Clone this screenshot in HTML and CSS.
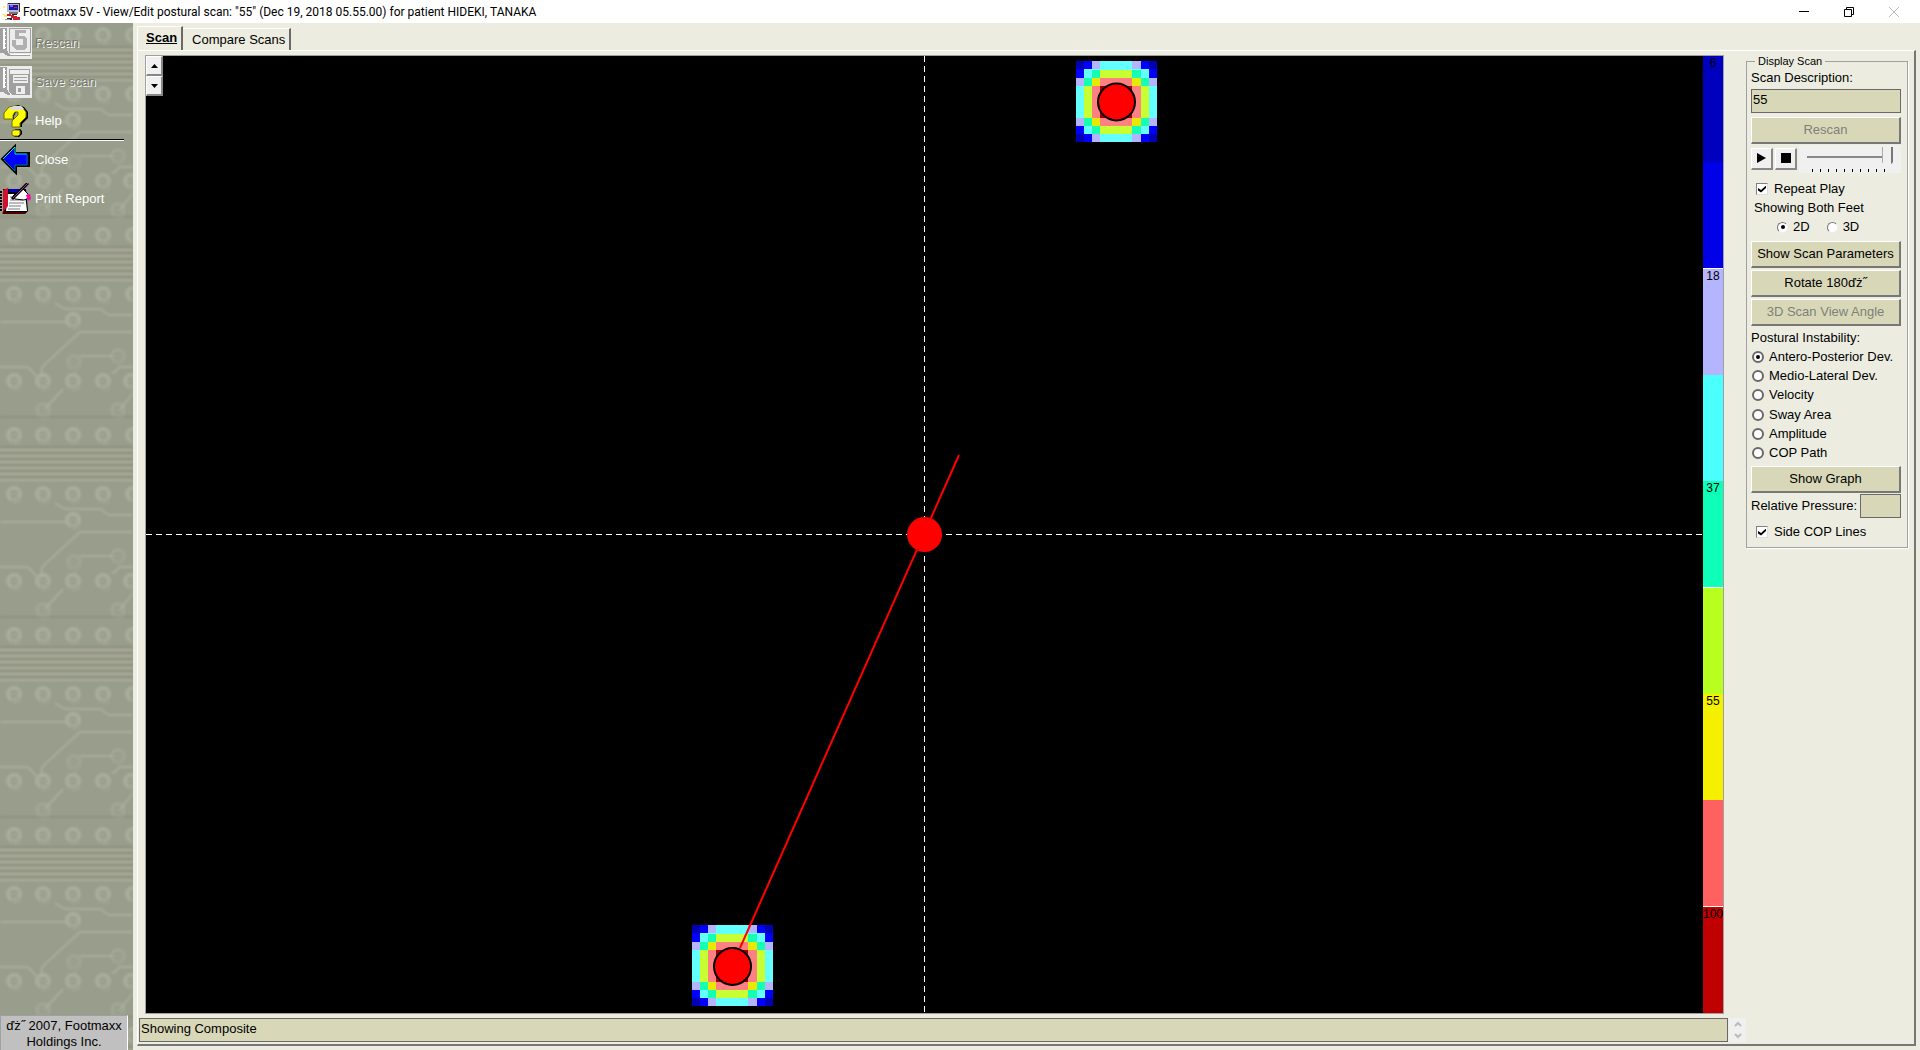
FILE: index.html
```html
<!DOCTYPE html>
<html lang="en">
<head>
<meta charset="utf-8">
<title>Footmaxx 5V</title>
<link rel="stylesheet" href="styles.css">
</head>
<body>
<div class="window">
  <header class="titlebar">
    <svg class="app-icon" width="18" height="18" viewBox="0 0 18 18" shape-rendering="crispEdges">
      <path d="M1 3h2v2H1zM0 11h3v1h2v2H2v-2H0z" fill="#ffee60"/>
      <path d="M5 0h13v9H5z" fill="#b8b8c8"/><path d="M6 0h12v1H6zM17 1h1v8h-1z" fill="#333"/>
      <path d="M7 2h9v5H7z" fill="#1818b0"/><path d="M8 2h3v2H8z" fill="#6868ff"/><path d="M12 4h3v1h-3z" fill="#e02020"/>
      <path d="M7 9h9v2H7z" fill="#777"/><path d="M5 11h4v1h3v1h3v1h3v3h-7v-2H9v-2H5z" fill="#d02030"/>
      <path d="M10 11h5v1h-5zM5 15h5v2H5z" fill="#223"/><path d="M3 16h5v1H3z" fill="#99a"/>
    </svg>
    <h1 class="title">Footmaxx 5V - View/Edit postural scan: "55" (Dec 19, 2018 05.55.00) for patient HIDEKI, TANAKA</h1>
    <div class="window-buttons">
      <button class="win-btn" aria-label="Minimize"><svg width="10" height="10" viewBox="0 0 10 10"><path d="M0 4.500h10" stroke="#000"/></svg></button>
      <button class="win-btn" aria-label="Restore"><svg width="10" height="10" viewBox="0 0 10 10"><path d="M.5 2.500h7v7h-7zM2.500 2.500v-2h7v7h-2" fill="none" stroke="#000"/></svg></button>
      <button class="win-btn" aria-label="Close window" disabled><svg width="10" height="10" viewBox="0 0 10 10"><path d="M0 0l10 10M10 0L0 10" stroke="#bbb"/></svg></button>
    </div>
  </header>

  <div class="body">
    <nav class="sidebar">
      <svg class="texture" width="100%" height="100%" aria-hidden="true">
        <defs>
          <filter id="soft"><feGaussianBlur stdDeviation="1.200"/></filter>
          <g id="chip" fill="none"><circle r="6" stroke="#b4b8a8" stroke-width="4"/><path d="M-4 0h7M-2 5l4 5M3 4l3 5" stroke="#a5a997" stroke-width="3"/></g>
          <pattern id="board" width="133" height="200" patternUnits="userSpaceOnUse">
            <rect width="133" height="200" fill="#999d8b"/>
            <g filter="url(#soft)">
              <path d="M0 27h133M0 33h133M0 39h133M0 45h133M0 51h133M0 57h133M0 99h66M80 109h53M80 133h32M0 144h28l8 9M55 80l10 6h35l9 6h24M80 109l-38 35v10M63 166l-18 20M112 151l8-7h13M133 170l-14 18" fill="none" stroke="#a9ad9b" stroke-width="2"/>
              <path d="M0 24h133M0 30h133M0 36h133M0 42h133M0 48h133M0 54h133M0 194h133" stroke="#8d917d" stroke-width="2"/>
              <g opacity="0.600">
                <use href="#chip" x="14" y="12"/><use href="#chip" x="43" y="12"/><use href="#chip" x="73" y="12"/><use href="#chip" x="103" y="12"/><use href="#chip" x="133" y="12"/>
                <use href="#chip" x="14" y="71"/><use href="#chip" x="43" y="71"/><use href="#chip" x="73" y="71"/><use href="#chip" x="103" y="71"/><use href="#chip" x="133" y="71"/>
                <use href="#chip" x="14" y="158"/><use href="#chip" x="43" y="158"/><use href="#chip" x="73" y="158"/><use href="#chip" x="103" y="158"/><use href="#chip" x="131" y="158"/>
                <use href="#chip" x="73" y="97"/>
              </g>
              <g opacity="0.300">
                <use href="#chip" x="74" y="139"/><use href="#chip" x="118" y="133"/><use href="#chip" x="43" y="187"/><use href="#chip" x="118" y="187"/>
              </g>
            </g>
          </pattern>
        </defs>
        <rect width="100%" height="100%" fill="url(#board)"/>
      </svg>
      <div class="tools">
        <button class="tool" disabled>
          <svg width="32" height="32" viewBox="0 0 32 32" shape-rendering="crispEdges">
            <path d="M0 0h32v32H0z" fill="#ececec"/><path d="M0 1h7v22l3 5h20v1H8l-5-3H0z" fill="#a0a0a0"/>
            <path d="M3 2h2v20H3zM5 4h1v1H5zM5 8h1v1H5zM5 12h1v1H5zM5 16h1v1H5zM5 20h1v1H5z" fill="#fff"/>
            <path d="M9.500 1.500h21v24h-21z" fill="none" stroke="#a0a0a0"/><path d="M11 27h18" stroke="#fff"/>
            <path d="M15 3h11v3h-7v3h5l3 3v8l-3 3h-8l-4-4v-6h4v5h7v-6h-8z" fill="#b0b0b0"/>
          </svg>
          <span>Rescan</span>
        </button>
        <button class="tool" disabled>
          <svg width="32" height="32" viewBox="0 0 32 32" shape-rendering="crispEdges">
            <path d="M0 0h32v32H0z" fill="#ececec"/><path d="M0 1h7v22l3 5v1H8l-5-3H0z" fill="#a0a0a0"/>
            <path d="M3 2h2v20H3zM5 4h1v1H5zM5 8h1v1H5zM5 12h1v1H5zM5 16h1v1H5zM5 20h1v1H5z" fill="#fff"/>
            <path d="M9 3h21v26H12l-3-3z" fill="#a0a0a0"/><path d="M10 4h19v4H10zM13 9h15v8H13zM16 20h9v8h-9z" fill="#eee"/>
            <path d="M14 11h13v1H14zM14 14h13v1H14zM18 22h3v4h-3z" fill="#a0a0a0"/>
          </svg>
          <span>Save scan</span>
        </button>
        <button class="tool">
          <svg width="32" height="32" viewBox="0 0 32 32">
            <path d="M6 14V8l5-6 7-2 6 2 4 5v6l-6 6v3h-9v-6l6-6V7h-3l-2 4v3z" fill="#000"/>
            <path d="M4 14V8l5-6 7-1 6 1 4 5v5l-6 6v4h-8v-6l6-6V7h-3l-2 3v4z" fill="#ff0" stroke="#777000"/>
            <path d="M9 3l5-2h7l3 3-2 1H11z" fill="#ddd"/>
            <path d="M13 26l3-2h4l2 2v3l-3 3h-4l-2-2z" fill="#000"/><path d="M12 26l2-1h5l1 1v3l-2 2h-4l-2-1z" fill="#ff0" stroke="#777000"/>
          </svg>
          <span>Help</span>
        </button>
        <hr class="divider">
        <button class="tool">
          <svg width="32" height="32" viewBox="0 0 32 32">
            <path d="M2 15L15 2v7h14v13H16v7z" fill="#00f" stroke="#000" stroke-width="2"/>
            <path d="M3 15L15 3v7h12" fill="none" stroke="#0ee" stroke-width="1"/><path d="M4 16l11 11v-6h12V11" fill="none" stroke="#077" stroke-width="1"/>
          </svg>
          <span>Close</span>
        </button>
        <button class="tool">
          <svg width="32" height="32" viewBox="0 0 32 32">
            <path d="M3 6h23l2 22-3 3H3z" fill="#000"/><path d="M9 6h14v3H9z" fill="#0000c0"/>
            <path d="M8 11h17l2 17H6z" fill="#fff"/><path d="M10 14h9M10 17h13M9 20h15M9 23h12M8 26h12" stroke="#bbb" stroke-width="2"/>
            <path d="M3 7l5-2v18l-5 6z" fill="#d01030"/><path d="M1 8v20" stroke="#000" stroke-width="2" stroke-dasharray="2 1"/>
            <path d="M17 9l5-4 6 6 1 4-5 2-9-1-2-3z" fill="#fff" stroke="#000"/><path d="M26 12l4-1 1 5-3 2z" fill="#f0a"/>
            <path d="M28 0L12 16" stroke="#000" stroke-width="3"/><path d="M28 0L13 15" stroke="#b030b0" stroke-width="1"/>
            <path d="M2 30h23" stroke="#900"/>
          </svg>
          <span>Print Report</span>
        </button>
      </div>
      <p class="copyright">ďż˝ 2007, Footmaxx Holdings Inc.</p>
    </nav>

    <main class="main">
      <div class="tabs" role="tablist">
        <button class="tab selected" role="tab" aria-selected="true">Scan</button>
        <button class="tab" role="tab" aria-selected="false">Compare Scans</button>
      </div>
      <section class="panel">
        <div class="work">
          <div class="scan">
            <svg class="plot" viewBox="0 0 1557 957">
              <defs>
                <g id="foot" shape-rendering="crispEdges">
                  <path d="M0 0h81v81H0z" fill="#64ffff"/>
                  <path d="M0 0h8v8H0zM73 0h8v8h-8zM0 73h8v8H0zM73 73h8v8h-8z" fill="#0000b4"/>
                  <path d="M8 0h8v8H8zM65 0h8v8h-8zM0 8h8v9H0zM73 8h8v9h-8zM0 65h8v8H0zM73 65h8v8h-8zM8 73h8v8H8zM65 73h8v8h-8z" fill="#0000ff"/>
                  <path d="M16 0h8v8h-8zM56 0h9v8h-9zM0 17h8v8H0zM73 17h8v8h-8zM0 57h8v8H0zM73 57h8v8h-8zM16 73h8v8h-8zM56 73h9v8h-9z" fill="#b4b4ff"/>
                  <path d="M16 9h49v8H16zM16 65h49v8H16zM8 17h8v48H8zM65 17h8v48h-8z" fill="#c8ff32"/>
                  <path d="M16 9h8v8h-8zM56 9h9v8h-9zM8 17h8v8H8zM65 17h8v8h-8zM8 57h8v8H8zM65 57h8v8h-8zM16 65h8v8h-8zM56 65h9v8h-9z" fill="#14ffb4"/>
                  <path d="M16 17h49v48H16z" fill="#ff8080"/>
                  <path d="M16 17h8v8h-8zM56 17h9v8h-9zM16 57h8v8h-8zM56 57h9v8h-9z" fill="#e8e800"/>
                  <path d="M24 25h8v8h-8zM48 25h8v8h-8zM24 49h8v8h-8zM48 49h8v8h-8z" fill="#a00000"/>
                </g>
              </defs>
              <path d="M778.500 0v957M0 478.500h1557" stroke="#fff" stroke-dasharray="6 4"/>
              <use href="#foot" x="930" y="5"/>
              <circle cx="970.500" cy="46" r="18.500" fill="#f00" stroke="#000" stroke-width="2"/>
              <use href="#foot" x="546" y="869"/>
              <circle cx="586.500" cy="910.500" r="18.500" fill="#f00" stroke="#000" stroke-width="2"/>
              <path d="M813 399L594 892" stroke="#f00" stroke-width="2"/>
              <circle cx="778.500" cy="478.500" r="17.500" fill="#f00"/>
            </svg>
            <div class="zoomer">
              <button class="step" aria-label="Up"><svg width="7" height="4" viewBox="0 0 7 4"><path d="M0 4L3.500 0 7 4z"/></svg></button>
              <button class="step" aria-label="Down"><svg width="7" height="4" viewBox="0 0 7 4"><path d="M0 0L3.500 4 7 0z"/></svg></button>
            </div>
            <div class="scale">
              <span class="band c6">6</span>
              <span class="band c12"></span>
              <span class="band c18">18</span>
              <span class="band c28"></span>
              <span class="band c37">37</span>
              <span class="band c46"></span>
              <span class="band c55">55</span>
              <span class="band c75"></span>
              <span class="band c100">100</span>
            </div>
          </div>
          <aside class="side">
            <fieldset class="group">
              <legend>Display Scan</legend>
              <label class="text-line tall" for="desc">Scan Description:</label>
              <input class="field" id="desc" type="text" value="55">
              <button class="btn" disabled>Rescan</button>
              <div class="player">
                <button class="mini" aria-label="Play"><svg width="10" height="10" viewBox="0 0 10 10"><path d="M0 0l9 5-9 5z"/></svg></button>
                <button class="mini" aria-label="Stop"><svg width="10" height="10" viewBox="0 0 10 10"><path d="M0 0h10v10H0z"/></svg></button>
                <input class="slider" type="range" min="0" max="9" value="9" aria-label="Frame">
              </div>
              <label class="check"><input type="checkbox" checked>Repeat Play</label>
              <p class="text-line inset">Showing Both Feet</p>
              <div class="dims">
                <label class="sunk"><input type="radio" name="dim" checked>2D</label>
                <label class="sunk"><input type="radio" name="dim">3D</label>
              </div>
              <div class="stack">
                <button class="btn">Show Scan Parameters</button>
                <button class="btn">Rotate 180ďż˝</button>
                <button class="btn" disabled>3D Scan View Angle</button>
              </div>
              <p class="text-line">Postural Instability:</p>
              <div class="radios">
                <label><input type="radio" name="instab" checked>Antero-Posterior Dev.</label>
                <label><input type="radio" name="instab">Medio-Lateral Dev.</label>
                <label><input type="radio" name="instab">Velocity</label>
                <label><input type="radio" name="instab">Sway Area</label>
                <label><input type="radio" name="instab">Amplitude</label>
                <label><input type="radio" name="instab">COP Path</label>
              </div>
              <button class="btn">Show Graph</button>
              <div class="pressure">
                <label for="pressure">Relative Pressure:</label>
                <input class="field" id="pressure" type="text">
              </div>
              <label class="check"><input type="checkbox" checked>Side COP Lines</label>
            </fieldset>
          </aside>
        </div>
        <div class="status-row">
          <p class="status">Showing Composite</p>
          <div class="scroller">
            <svg width="8" height="20" viewBox="0 0 8 20"><path d="M1 6l3-3 3 3M1 14l3 3 3-3" fill="none" stroke="#bbb" stroke-width="2"/></svg>
          </div>
        </div>
      </section>
    </main>
  </div>
</div>
</body>
</html>
```
FILE: styles.css
```css
* { box-sizing: border-box; }
body { margin: 0; font: 13px/16px "Liberation Sans", Arial, sans-serif; color: #000; background: #ecede0; }
button, input { font: inherit; color: inherit; margin: 0; }
button { padding: 0; }
p { margin: 0; }
svg { display: block; flex: none; }

.window { min-height: 100vh; display: flex; flex-direction: column; }
.titlebar { height: 23px; background: #fff; display: flex; align-items: center; padding-left: 2px; gap: 3px; }
.title { margin: 0; font: 12px/16px Roboto, "Open Sans", sans-serif; flex: 1; white-space: nowrap; }
.window-buttons { display: flex; padding-right: 4px; }
.win-btn { width: 45px; height: 20px; border: 0; background: none; display: flex; align-items: center; justify-content: center; }

.body { flex: 1; display: flex; }

/* left toolbar */
.sidebar { width: 133px; flex: none; position: relative; display: flex; flex-direction: column; justify-content: space-between; background: #989c89; }
.texture { position: absolute; inset: 0; }
.tools { position: relative; padding-top: 4px; display: flex; flex-direction: column; gap: 7px; }
.tool { border: 0; background: none; display: flex; align-items: center; gap: 3px; height: 32px; color: #fff; white-space: nowrap; text-align: left; }
.tool:disabled { color: #787a70; text-shadow: 1px 1px 0 #f4f4f0; }
.divider { width: 124px; height: 2px; margin: -5px 0 -4px; border: 0; border-top: 1px solid #000; background: #fff; }
.copyright { position: relative; width: 128px; height: 36px; padding: 2px 0; background: #c0c0c0; border: 1px solid #a0a0a0; border-right-color: #fff; border-bottom: 0; text-align: center; }

/* tabbed panel */
.main { flex: 1; min-width: 0; display: flex; flex-direction: column; padding: 3px 4px 5px 4px; }
.tabs { height: 24px; display: flex; align-items: flex-end; }
.tab { height: 22px; border: 1px solid #fff; border-width: 1px 2px 0 0; border-right-color: #696969; background: none; padding: 0 4px 0 9px; }
.tab.selected { height: 24px; border-left: 1px solid #fff; padding: 0 4px 1px 8px; font-weight: bold; text-decoration: underline; }
.panel { flex: 1; display: flex; flex-direction: column; border: 1px solid #fff; border-right: 2px solid #777; border-bottom: 2px solid #777; padding: 4px 0 2px 1px; }
.work { flex: 1; display: flex; align-items: stretch; padding-left: 6px; }
.scan { flex: 1; min-width: 0; position: relative; display: flex; background: #000; border: 1px solid #a0a0a0; }
.plot { flex: 1; min-width: 0; height: auto; }
.zoomer { position: absolute; left: 0; top: 0; display: flex; flex-direction: column; }
.step { width: 17px; height: 20px; display: flex; align-items: center; justify-content: center; background: #f0f0f0; border: 1px solid #fff; border-right: 2px solid #888; border-bottom: 2px solid #888; }
.scale { width: 20px; display: flex; flex-direction: column; font-size: 12px; }
.band { flex: 1; text-align: center; line-height: 14px; }
.c6 { background: #0000bf; }
.c12 { background: #0000e8; }
.c18 { background: #b4b4ff; border-top: 1px solid #fff; }
.c28 { background: #4cffff; }
.c37 { background: #10ffb8; }
.c46 { background: #b8ff20; border-top: 1px solid #fff; }
.c55 { background: #f4f000; }
.c75 { background: #ff6060; }
.c100 { background: #c00000; border-top: 1px solid #fff; }

/* controls */
.side { width: 190px; padding: 0 6px 0 22px; }
.group { margin: 0; min-width: 0; border: 1px solid #a0a0a0; padding: 0 6px 5px 4px; display: flex; flex-direction: column; box-shadow: 1px 1px 0 #fff; }
.group legend { font-size: 11px; line-height: 12px; margin-left: 4px; padding: 0 3px; }
.text-line { display: block; height: 18px; line-height: 18px; white-space: nowrap; }
.text-line.tall { height: 22px; line-height: 22px; }
.inset { padding-left: 3px; }
.field { width: 100%; height: 24px; border: 1px solid #696969; background: #d8d8b8; padding: 0 1px 4px; margin: 0 0 4px; outline: 0; }
.btn { width: 100%; height: 27px; background: #d8d8b8; border: 1px solid #fff; border-right: 2px solid #777; border-bottom: 2px solid #777; white-space: nowrap; }
.btn:disabled { color: #808078; }
.player { display: flex; align-items: center; height: 29px; margin-bottom: 2px; gap: 2px; }
.mini { width: 22px; height: 22px; flex: none; display: flex; align-items: center; justify-content: center; background: #f0f0f0; border: 1px solid #fff; border-right: 2px solid #888; border-bottom: 2px solid #888; }
.slider { appearance: none; flex: 1; min-width: 0; height: 28px; padding: 2px 8px 5px; background: repeating-linear-gradient(90deg, #000 0 1px, transparent 1px 8px) 13px 24px / 73px 3px no-repeat #f0f0f0; }
.slider::-webkit-slider-runnable-track { height: 21px; background: linear-gradient(#888, #888) 0 9px / 100% 2px no-repeat; }
.slider::-webkit-slider-thumb { appearance: none; width: 11px; height: 21px; background: linear-gradient(90deg, #aaa 0 1px, #f0f0f0 1px 9px, #777 9px); clip-path: polygon(0 0, 100% 0, 100% 75%, 50% 100%, 0 75%); }
.check { display: flex; align-items: center; gap: 6px; padding-left: 5px; height: 20px; margin-top: 4px; }
.check input { appearance: none; width: 12px; height: 12px; background: #fff; border: 1px solid #808080; border-right-color: #ddd; border-bottom-color: #ddd; display: grid; place-items: center; }
.check input:checked::before { content: ""; width: 8px; height: 7px; background: #000; clip-path: polygon(0 35%, 38% 65%, 100% 0, 100% 35%, 38% 100%, 0 70%); }
.dims { display: flex; gap: 17px; padding-left: 26px; height: 20px; align-items: center; }
.dims label, .radios label { display: flex; align-items: center; gap: 5px; white-space: nowrap; }
.radios label { padding-left: 1px; }
input[type="radio"] { appearance: none; flex: none; width: 12px; height: 12px; border-radius: 50%; border: 2px solid #696969; background: #fff; display: grid; place-items: center; }
.sunk input[type="radio"] { width: 11px; height: 11px; border: 1px solid #777; border-right-color: #eee; border-bottom-color: #eee; }
input[type="radio"]:checked::before { content: ""; width: 4px; height: 4px; border-radius: 50%; background: #000; }
.stack { display: flex; flex-direction: column; gap: 2px; margin: 4px 0 3px; }
.radios { display: grid; grid-auto-rows: 19px; margin: 0 0 3px; height: 116px; align-content: space-between; }
.pressure { display: flex; align-items: center; justify-content: space-between; white-space: nowrap; margin-top: 1px; }
.pressure .field { width: 41px; margin: 0; }

.status-row { display: flex; margin-top: 4px; gap: 1px; padding-right: 168px; }
.status { flex: 1; height: 24px; line-height: 20px; padding-left: 1px; background: #d8d8b8; border: 1px solid #696969; }
.scroller { width: 17px; height: 24px; background: #f0f0f0; display: flex; align-items: center; justify-content: center; }
```
